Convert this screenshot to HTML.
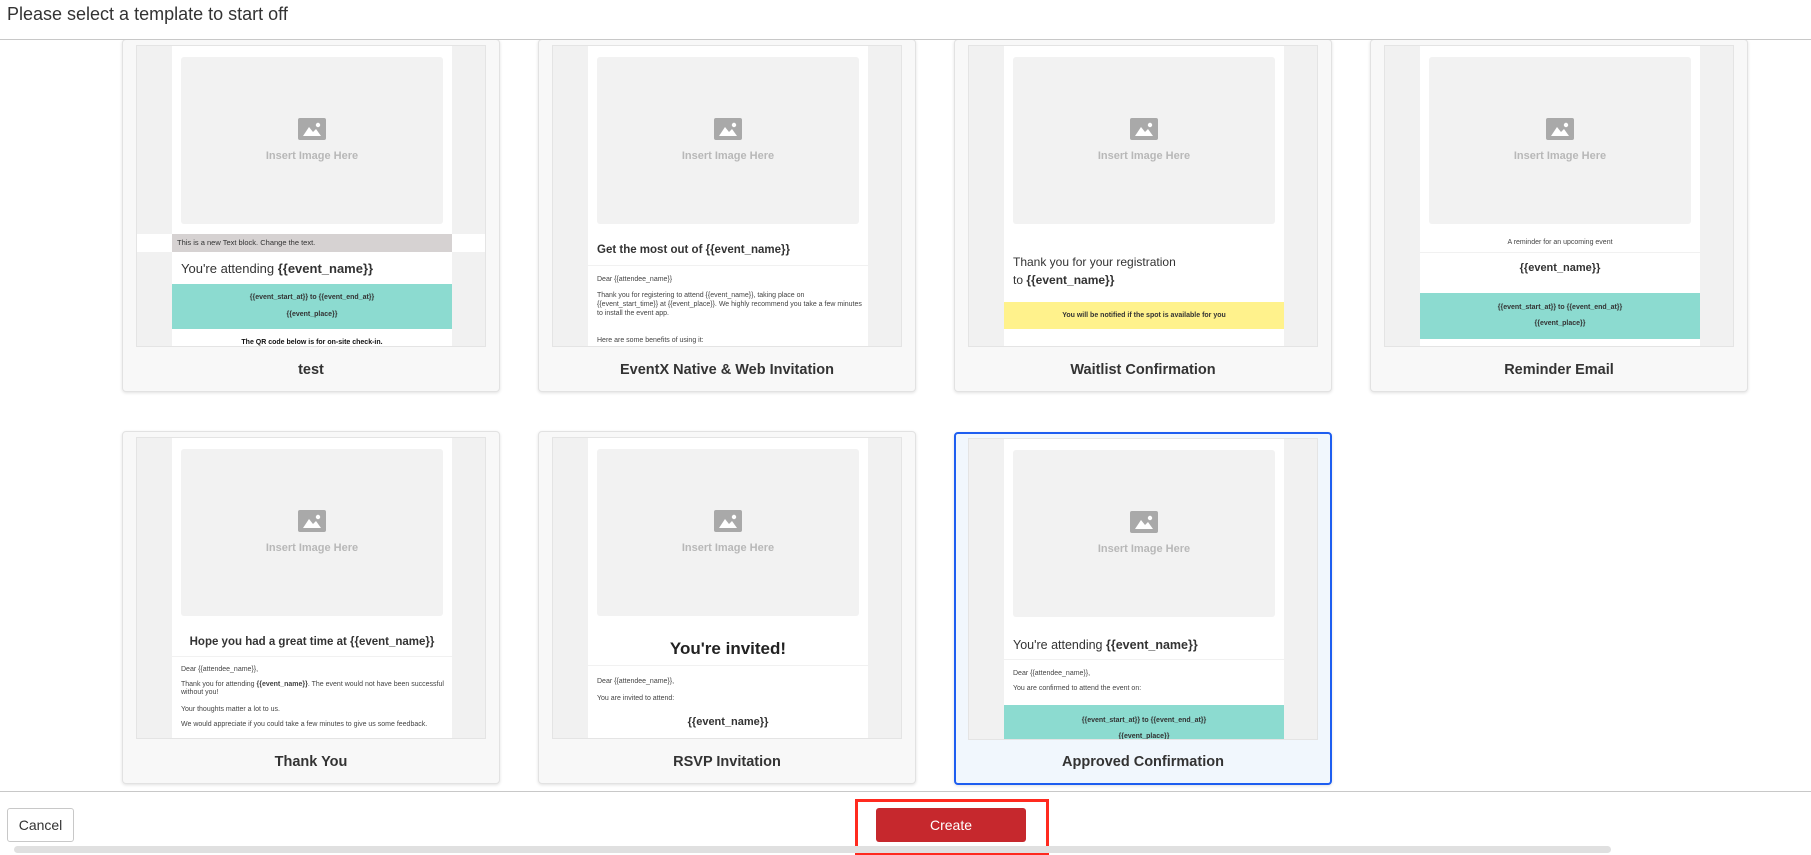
<!DOCTYPE html>
<html><head><meta charset="utf-8">
<style>
*{margin:0;padding:0;box-sizing:border-box}
body{width:1811px;height:855px;overflow:hidden;background:#fff;font-family:"Liberation Sans",sans-serif;position:relative;color:#333}
.hdr{position:absolute;left:0;top:0;width:1811px;height:40px;border-bottom:1.5px solid #c8c8c8;background:#fff;z-index:5}
.hdr span{position:absolute;left:7px;top:4px;font-size:18px;color:#333}
.card{position:absolute;width:378px;height:353px;background:#f8f8f8;border:1px solid #e2e2e2;border-radius:4px;box-shadow:0 1px 3px rgba(0,0,0,.12)}
.card.sel{background:#f1f7fd;border:2px solid #1e5ef0}
.pv{position:absolute;left:13px;top:5px;width:350px;height:302px;background:#f1f1f1;border:1px solid #e4e4e4;overflow:hidden}
.in{position:absolute;left:35px;top:0;width:280px;height:302px;background:#fff}
.img{position:absolute;left:9px;top:11px;width:262px;height:167px;background:#f2f2f2;border-radius:3px}
.ico{position:absolute;left:117px;top:61px;width:28px;height:22px;background:#a9a9a9;border-radius:2px;overflow:hidden}
.ins{position:absolute;left:0;width:262px;top:93px;text-align:center;font-size:11px;font-weight:bold;color:#b8b8b8}
.t{position:absolute;white-space:nowrap;line-height:12px}
.ttl{position:absolute;left:0;width:100%;top:322px;text-align:center;font-size:14.5px;font-weight:bold;color:#333}
.teal{position:absolute;left:0;width:280px;background:#8cdbd0}
.s7{font-size:7px;color:#444}
.c{left:0;width:280px;text-align:center}
.dv{position:absolute;left:0;width:280px;height:1px;background:#f1f1f1}
</style></head><body>
<div class="hdr"><span>Please select a template to start off</span></div>

<div class="card" style="left:122px;top:39px">
 <div class="pv">
  <div style="position:absolute;left:0;top:188px;width:350px;height:18px;background:#fff"></div>
  <div class="in">
   <div class="img"><div class="ico"><svg width="28" height="22"><path d="M5 18 L11 9 L15 14 L18 11 L23 18Z" fill="#fff"/><circle cx="20" cy="7" r="2.2" fill="#fff"/></svg></div><div class="ins">Insert Image Here</div></div>
   <div style="position:absolute;left:0;top:188px;width:280px;height:18px;background:#d6d2d2"></div>
   <div class="t" style="left:5px;top:191px;font-size:7.5px;color:#333">This is a new Text block. Change the text.</div>
   <div class="t" style="left:9px;top:216px;font-size:13px;line-height:14px;color:#333">You're attending <b>{{event_name}}</b></div>
   <div class="teal" style="top:238px;height:45px"></div>
   <div class="t c" style="top:246px;font-size:7px;font-weight:bold;color:#333">{{event_start_at}} to {{event_end_at}}</div>
   <div class="t c" style="top:263px;font-size:7px;font-weight:bold;color:#333">{{event_place}}</div>
   <div class="t c" style="top:291px;font-size:7px;font-weight:bold;color:#111">The QR code below is for on-site check-in.</div>
  </div>
 </div>
 <div class="ttl">test</div>
</div>

<div class="card" style="left:538px;top:39px">
 <div class="pv"><div class="in">
   <div class="img"><div class="ico"><svg width="28" height="22"><path d="M5 18 L11 9 L15 14 L18 11 L23 18Z" fill="#fff"/><circle cx="20" cy="7" r="2.2" fill="#fff"/></svg></div><div class="ins">Insert Image Here</div></div>
   <div class="t" style="left:9px;top:197px;font-size:11.5px;line-height:14px;font-weight:bold;color:#333">Get the most out of {{event_name}}</div>
   <div class="dv" style="top:219px"></div>
   <div class="t s7" style="left:9px;top:228px">Dear {{attendee_name}}</div>
   <div class="t s7" style="left:9px;top:245px;line-height:9px;white-space:normal;width:265px">Thank you for registering to attend {{event_name}}, taking place on {{event_start_time}} at {{event_place}}. We highly recommend you take a few minutes to install the event app.</div>
   <div class="t s7" style="left:9px;top:289px">Here are some benefits of using it:</div>
 </div></div>
 <div class="ttl">EventX Native &amp; Web Invitation</div>
</div>

<div class="card" style="left:954px;top:39px">
 <div class="pv"><div class="in">
   <div class="img"><div class="ico"><svg width="28" height="22"><path d="M5 18 L11 9 L15 14 L18 11 L23 18Z" fill="#fff"/><circle cx="20" cy="7" r="2.2" fill="#fff"/></svg></div><div class="ins">Insert Image Here</div></div>
   <div class="t" style="left:9px;top:210px;font-size:12px;color:#333">Thank you for your registration</div>
   <div class="t" style="left:9px;top:228px;font-size:12px;color:#333">to <b>{{event_name}}</b></div>
   <div style="position:absolute;left:0;top:256px;width:280px;height:27px;background:#fff28c"></div>
   <div class="t c" style="top:264px;font-size:7px;font-weight:bold;color:#333">You will be notified if the spot is available for you</div>
 </div></div>
 <div class="ttl">Waitlist Confirmation</div>
</div>

<div class="card" style="left:1370px;top:39px">
 <div class="pv"><div class="in">
   <div class="img"><div class="ico"><svg width="28" height="22"><path d="M5 18 L11 9 L15 14 L18 11 L23 18Z" fill="#fff"/><circle cx="20" cy="7" r="2.2" fill="#fff"/></svg></div><div class="ins">Insert Image Here</div></div>
   <div class="t c s7" style="top:191px">A reminder for an upcoming event</div>
   <div class="dv" style="top:206px"></div>
   <div class="t c" style="top:216px;font-size:11px;font-weight:bold;color:#333">{{event_name}}</div>
   <div class="teal" style="top:247px;height:46px"></div>
   <div class="t c" style="top:256px;font-size:7px;font-weight:bold;color:#333">{{event_start_at}} to {{event_end_at}}</div>
   <div class="t c" style="top:272px;font-size:7px;font-weight:bold;color:#333">{{event_place}}</div>
 </div></div>
 <div class="ttl">Reminder Email</div>
</div>

<div class="card" style="left:122px;top:431px">
 <div class="pv"><div class="in">
   <div class="img"><div class="ico"><svg width="28" height="22"><path d="M5 18 L11 9 L15 14 L18 11 L23 18Z" fill="#fff"/><circle cx="20" cy="7" r="2.2" fill="#fff"/></svg></div><div class="ins">Insert Image Here</div></div>
   <div class="t c" style="top:197px;font-size:11.5px;line-height:14px;font-weight:bold;color:#333">Hope you had a great time at {{event_name}}</div>
   <div class="dv" style="top:218px"></div>
   <div class="t s7" style="left:9px;top:226px">Dear {{attendee_name}},</div>
   <div class="t s7" style="left:9px;top:243px;line-height:8px;white-space:normal;width:265px">Thank you for attending <b>{{event_name}}</b>. The event would not have been successful without you!</div>
   <div class="t s7" style="left:9px;top:266px">Your thoughts matter a lot to us.</div>
   <div class="t s7" style="left:9px;top:281px">We would appreciate if you could take a few minutes to give us some feedback.</div>
 </div></div>
 <div class="ttl">Thank You</div>
</div>

<div class="card" style="left:538px;top:431px">
 <div class="pv"><div class="in">
   <div class="img"><div class="ico"><svg width="28" height="22"><path d="M5 18 L11 9 L15 14 L18 11 L23 18Z" fill="#fff"/><circle cx="20" cy="7" r="2.2" fill="#fff"/></svg></div><div class="ins">Insert Image Here</div></div>
   <div class="t c" style="top:201px;font-size:17px;line-height:20px;font-weight:bold;color:#222">You're invited!</div>
   <div class="dv" style="top:227px"></div>
   <div class="t s7" style="left:9px;top:238px">Dear {{attendee_name}},</div>
   <div class="t s7" style="left:9px;top:255px">You are invited to attend:</div>
   <div class="t c" style="top:278px;font-size:11px;font-weight:bold;color:#333">{{event_name}}</div>
 </div></div>
 <div class="ttl">RSVP Invitation</div>
</div>

<div class="card sel" style="left:954px;top:432px">
 <div class="pv" style="left:12px;top:4px"><div class="in">
   <div class="img"><div class="ico"><svg width="28" height="22"><path d="M5 18 L11 9 L15 14 L18 11 L23 18Z" fill="#fff"/><circle cx="20" cy="7" r="2.2" fill="#fff"/></svg></div><div class="ins">Insert Image Here</div></div>
   <div class="t" style="left:9px;top:199px;font-size:12.5px;line-height:14px;color:#333">You're attending <b>{{event_name}}</b></div>
   <div class="dv" style="top:220px"></div>
   <div class="t s7" style="left:9px;top:229px">Dear {{attendee_name}},</div>
   <div class="t s7" style="left:9px;top:244px">You are confirmed to attend the event on:</div>
   <div class="teal" style="top:266px;height:36px"></div>
   <div class="t c" style="top:276px;font-size:7px;font-weight:bold;color:#333">{{event_start_at}} to {{event_end_at}}</div>
   <div class="t c" style="top:292px;font-size:7px;font-weight:bold;color:#333">{{event_place}}</div>
 </div></div>
 <div class="ttl" style="top:320px">Approved Confirmation</div>
</div>

<div style="position:absolute;left:0;top:791px;width:1811px;height:64px;background:#fff;border-top:1.5px solid #c8c8c8"></div>
<div style="position:absolute;left:7px;top:808px;width:67px;height:34px;border:1px solid #c8c8c8;border-radius:3px;background:#fff;font-size:14px;line-height:32px;text-align:center;color:#333">Cancel</div>
<div style="position:absolute;left:855px;top:799px;width:194px;height:56px;border:3px solid #ff2a1f"></div>
<div style="position:absolute;left:876px;top:808px;width:150px;height:34px;background:#c6282d;border-radius:3px;font-size:14px;line-height:34px;text-align:center;color:#fff">Create</div>
<div style="position:absolute;left:14px;top:846px;width:1597px;height:7px;background:#e0e0e0;border-radius:4px"></div>
</body></html>
